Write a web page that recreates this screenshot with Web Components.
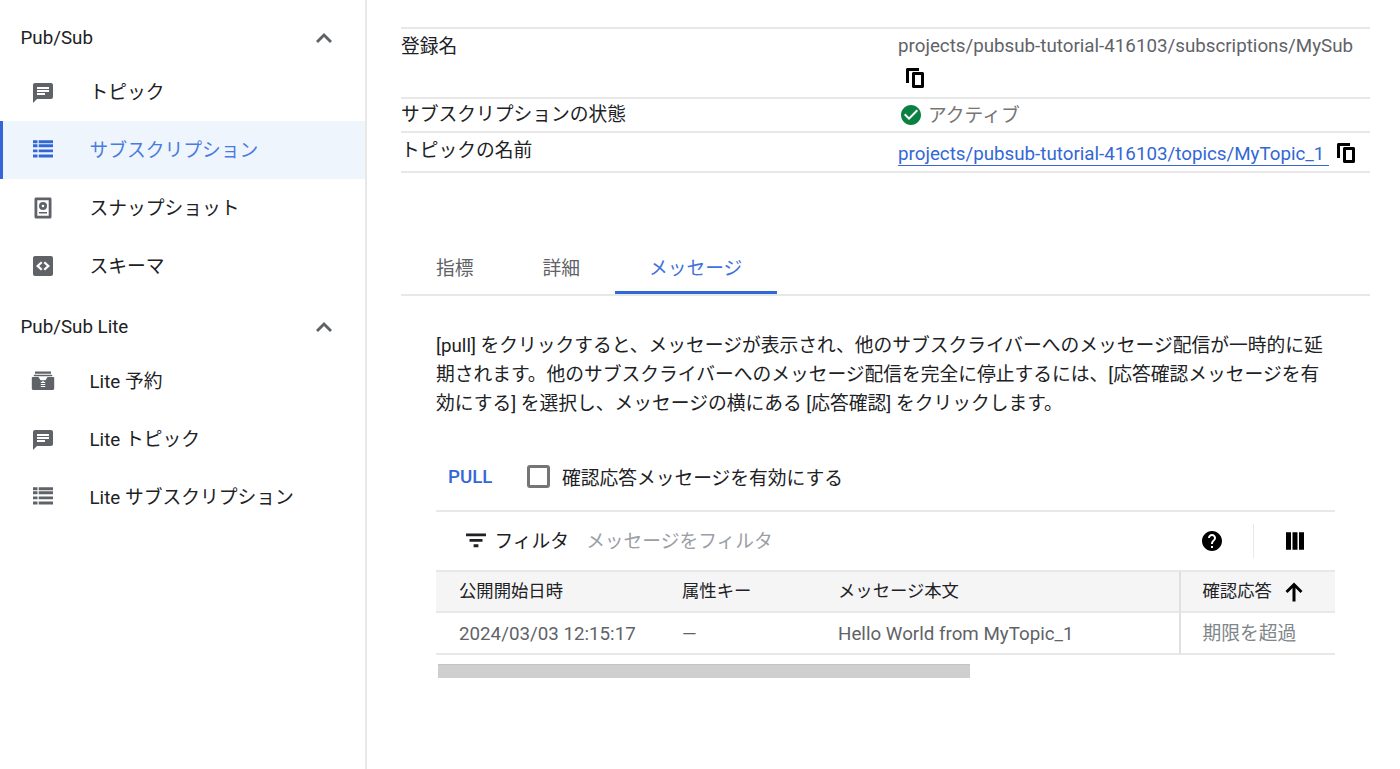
<!DOCTYPE html>
<html lang="ja">
<head>
<meta charset="utf-8">
<title>Pub/Sub</title>
<style>
  html, body { margin: 0; height: 100%; background: #fff; overflow: hidden; }
  body {
    display: flex;
    font-family: Roboto, "Noto Sans CJK JP", sans-serif;
    font-size: 18.75px;
    color: #202124;
  }
</style>
</head>
<body>
<side-nav>
  <nav-section label="Pub/Sub">
    <nav-item icon="chat">トピック</nav-item>
    <nav-item icon="list" active>サブスクリプション</nav-item>
    <nav-item icon="snapshot">スナップショット</nav-item>
    <nav-item icon="schema">スキーマ</nav-item>
  </nav-section>
  <nav-section label="Pub/Sub Lite" class="lite">
    <nav-item icon="reservation">Lite 予約</nav-item>
    <nav-item icon="chat">Lite トピック</nav-item>
    <nav-item icon="list">Lite サブスクリプション</nav-item>
  </nav-section>
</side-nav>
<sub-detail></sub-detail>

<script>
(function () {
const ICONS = {
  chat: '<path transform="translate(0 1)" d="M20 2H4c-1.1 0-1.99.9-1.99 2L2 22l4-4h14c1.1 0 2-.9 2-2V4c0-1.1-.9-2-2-2zM6 9h12v2H6V9zm8 5H6v-2h8v2zm4-6H6V6h12v2z"/>',
  list: '<path transform="translate(0 -1.200)" d="M2 7.500h4.500v2.900H2zM2 12.600h4.500v2.900H2zM2 17.700h4.500v2.900H2zM2 3.500h4.500v2.900H2zM7.700 7.500H22v2.900H7.700zM7.700 12.600H22v2.900H7.700zM7.700 17.700H22v2.900H7.700zM7.700 3.500H22v2.900H7.700z"/>',
  snapshot: '<path fill-rule="evenodd" d="M5 1.500h14c.8 0 1.500.7 1.500 1.500v18c0 .8-.7 1.500-1.500 1.500H5c-.8 0-1.500-.7-1.500-1.500V3c0-.8.7-1.500 1.500-1.500zM6.300 4.300v15.400h11.400V4.300z"/><path fill-rule="evenodd" d="M12 6a4 4 0 1 1 0 8 4 4 0 0 1 0-8zm0 2.700a1.300 1.300 0 1 0 0 2.600 1.300 1.300 0 0 0 0-2.600zM8 16h8v1.500H8z"/>',
  schema: '<path fill-rule="evenodd" d="M4 2h16c1.100 0 2 .9 2 2v16c0 1.100-.9 2-2 2H4c-1.100 0-2-.9-2-2V4c0-1.100.9-2 2-2zm6 5.500L5 12l5 4.500 1.500-1.600L8.200 12l3.300-2.900zm4 0l-1.500 1.600 3.300 2.900-3.300 2.900 1.500 1.600 5-4.500z"/>',
  reservation: '<path fill-rule="evenodd" d="M4 2.500h16v2.300H4zM2.800 5.700h18.400v1.600H2.800zM1.500 8h21c.4 0 .7.3.7.7v10.800c0 .8-.7 1.500-1.500 1.500H2.300c-.8 0-1.500-.7-1.500-1.500V8.700c0-.4.3-.7.7-.7zM7.500 8l2 3.300h5l2-3.300zM11.300 12v1H9.800v1.100h4.400V13h-1.500v-1zm-1.500 3v1h4.400v-1zm0 2v1h4.400v-1z"/>',
  copy: '<path fill-rule="evenodd" d="M4.500 2H16v3H6v12H3V3.500C3 2.700 3.700 2 4.500 2zM10.500 6h9c.8 0 1.500.7 1.500 1.500v13c0 .8-.7 1.500-1.500 1.500h-9C9.700 22 9 21.300 9 20.500v-13C9 6.700 9.700 6 10.500 6zM12 9v10h6V9z"/>',
  check: '<path d="M12 2C6.480 2 2 6.480 2 12s4.480 10 10 10 10-4.480 10-10S17.520 2 12 2zm-2 15l-5-5 1.410-1.410L10 14.170l7.590-7.590L19 8l-9 9z"/>',
  help: '<path d="M12 2C6.480 2 2 6.480 2 12s4.480 10 10 10 10-4.480 10-10S17.520 2 12 2zm1 17h-2v-2h2v2zm2.070-7.750l-.9.920C13.450 12.900 13 13.500 13 15h-2v-.5c0-1.100.45-2.100 1.170-2.830l1.240-1.260c.37-.36.59-.86.59-1.410 0-1.100-.9-2-2-2s-2 .9-2 2H8c0-2.210 1.790-4 4-4s4 1.790 4 4c0 .88-.36 1.680-.93 2.250z"/>',
  columns: '<path d="M3 3.250h5v17.500H3zM9.500 3.250h5v17.500h-5zM16 3.250h5v17.500h-5z"/>',
  arrowUp: '<path d="M12 2.500L3.500 11l2 2 5-4.900v13.400h3V8.100l5 4.900 2-2z"/>',
  filter: '<path d="M2.800 6h18.400v2.600H2.800zM6 11h12v2.600H6zM9.800 16h4.400v2.600H9.800z"/>',
  chevron: '<path d="M12 7l-8 8 2 2 6-6 6 6 2-2z"/>',
};

class MatIcon extends HTMLElement {
  connectedCallback() {
    const root = this.shadowRoot || this.attachShadow({ mode: 'open' });
    const size = this.getAttribute('size') || 24;
    root.innerHTML = `
      <style>
        :host { display: inline-flex; flex: none; width: ${size}px; height: ${size}px; color: inherit; }
        svg { width: 100%; height: 100%; fill: currentColor; display: block; }
      </style>
      <svg viewBox="0 0 24 24" aria-hidden="true">${ICONS[this.getAttribute('name')] || ''}</svg>`;
  }
}
customElements.define('mat-icon', MatIcon);

class SideNav extends HTMLElement {
  constructor() {
    super();
    this.attachShadow({ mode: 'open' }).innerHTML = `
      <style>
        :host {
          display: block;
          flex: none;
          width: 365px;
          height: 769px;
          box-sizing: content-box;
          border-right: 2px solid #e8e8e8;
          padding-top: 12px;
        }
      </style>
      <slot></slot>`;
  }
}
customElements.define('side-nav', SideNav);

class NavSection extends HTMLElement {
  constructor() {
    super();
    const label = this.getAttribute('label');
    this.attachShadow({ mode: 'open' }).innerHTML = `
      <style>
        :host { display: block; }
        :host(.lite) { margin-top: 6px; }
        .head {
          display: flex;
          align-items: center;
          justify-content: space-between;
          height: 51px;
          padding: 0 29px 0 20.5px;
          color: #202124;
        }
        mat-icon { color: #5f6368; }
      </style>
      <div class="head"><span>${label}</span><mat-icon name="chevron"></mat-icon></div>
      <slot></slot>`;
  }
}
customElements.define('nav-section', NavSection);

class NavItem extends HTMLElement {
  constructor() {
    super();
    const active = this.hasAttribute('active');
    this.attachShadow({ mode: 'open' }).innerHTML = `
      <style>
        :host { display: block; }
        .row {
          display: flex;
          align-items: center;
          height: 58px;
          gap: 34.5px;
          padding-left: 31px;
          box-sizing: border-box;
          color: #202124;
        }
        .row span { padding-bottom: 4px; }
        mat-icon { color: #5f6368; }
        .row.on {
          background: #eef5fd;
          border-left: 3px solid #3367d6;
          padding-left: 28px;
          color: #4a7be0;
        }
        .row.on mat-icon { color: #3367d6; }
      </style>
      <div class="row ${active ? 'on' : ''}">
        <mat-icon name="${this.getAttribute('icon')}"></mat-icon>
        <span><slot></slot></span>
      </div>`;
  }
}
customElements.define('nav-item', NavItem);

class DetailRow extends HTMLElement {
  constructor() {
    super();
    this.attachShadow({ mode: 'open' }).innerHTML = `
      <style>
        :host {
          display: grid;
          grid-template-columns: 497px 1fr;
          border-bottom: 2px solid #e8e8e8;
          line-height: 34px;
          color: #202124;
        }
        .label { padding-top: 1px; }
        .value { color: #5f6368; min-width: 0; }
      </style>
      <div class="label"><slot name="label"></slot></div>
      <div class="value"><slot></slot></div>`;
  }
}
customElements.define('detail-row', DetailRow);

class TabBar extends HTMLElement {
  constructor() {
    super();
    this.attachShadow({ mode: 'open' }).innerHTML = `
      <style>
        :host {
          display: flex;
          height: 55px;
          padding-left: .5px;
          border-bottom: 2px solid #e8e8e8;
          box-sizing: border-box;
          color: #5f6368;
        }
        .tab { display: flex; align-items: center; padding: 1px 34.5px 3px; height: 53px; box-sizing: border-box; }
        .tab.on { color: #3f72dc; border-bottom: 3px solid #3367d6; padding-bottom: 0; padding-right: 35px; }
      </style>
      <div class="tab">指標</div>
      <div class="tab">詳細</div>
      <div class="tab on">メッセージ</div>`;
  }
}
customElements.define('tab-bar', TabBar);

class MessageTable extends HTMLElement {
  constructor() {
    super();
    this.attachShadow({ mode: 'open' }).innerHTML = `
      <style>
        :host { display: block; width: 899px; font-size: 17.33px; color: #202124; }
        .filter {
          display: flex;
          align-items: center;
          height: 58px;
          border-top: 2px solid #e8e8e8;
          padding-left: 27px;
          font-size: 18.75px;
        }
        .filter .left { display: flex; align-items: center; padding-bottom: 3px; }
        .filter .ph { margin-left: 17px; color: #9aa0a6; }
        .filter .txt { margin-left: 5.5px; }
        .tools { margin-left: auto; display: flex; align-items: center; color: #000; }
        .sep { width: 1px; height: 34px; background: #e8e8e8; margin: 0 29.5px 0 29px; }
        .tools .cols { margin-right: 28px; }
        .grid {
          display: grid;
          grid-template-columns: 223px 156px 364px 1fr;
        }
        .cell {
          height: 42px;
          display: flex;
          align-items: center;
          padding-left: 23px;
          box-sizing: border-box;
          border-bottom: 2px solid #e8e8e8;
          white-space: nowrap;
        }
        .head { background: #f5f5f5; border-top: 2px solid #e8e8e8; height: 43px; padding-bottom: 4px; }
        .body { color: #5f6368; font-size: 18.75px; padding-top: 2px; }
        .last { border-left: 2px solid #e0e0e0; padding-left: 21.5px; }
        .head mat-icon { margin: 4px 0 0 10.5px; color: #000; }
        .body.muted { color: #80868b; padding-top: 0; padding-bottom: 4px; }
        .track { margin: 9px 0 0 2px; width: 532px; height: 14px; background: #cfcfcf; border-top: 1px solid #c4c4c4; box-sizing: border-box; }
      </style>
      <div class="filter">
        <div class="left">
          <mat-icon name="filter" size="26"></mat-icon>
          <span class="txt">フィルタ</span>
          <span class="ph">メッセージをフィルタ</span>
        </div>
        <div class="tools">
          <mat-icon name="help"></mat-icon>
          <div class="sep"></div>
          <mat-icon class="cols" name="columns"></mat-icon>
        </div>
      </div>
      <div class="grid">
        <div class="cell head">公開開始日時</div>
        <div class="cell head">属性キー</div>
        <div class="cell head">メッセージ本文</div>
        <div class="cell head last">確認応答<mat-icon name="arrowUp"></mat-icon></div>
        <div class="cell body">2024/03/03 12:15:17</div>
        <div class="cell body">—</div>
        <div class="cell body">Hello World from MyTopic_1</div>
        <div class="cell body last muted">期限を超過</div>
      </div>
      <div class="track"></div>`;
  }
}
customElements.define('message-table', MessageTable);

class SubDetail extends HTMLElement {
  constructor() {
    super();
    this.attachShadow({ mode: 'open' }).innerHTML = `
      <style>
        :host { display: block; flex: 1; min-width: 0; padding: 27px 30px 0 34px; }
        .rows { border-top: 2px solid #e8e8e8; }
        detail-row.tight { line-height: 31px; }
        .copy { display: block; margin: 0 0 4px 5px; height: 30px; color: #000; }
        .status { display: flex; align-items: center; gap: 5px; color: #757575; padding-left: 1px; height: 32px; }
        .status span { padding-top: 2px; }
        .status mat-icon { color: #0b8043; }
        .topic { display: flex; align-items: center; height: 36px; padding-top: 2px; }
        .topic a { color: #3367d6; text-decoration: none; border-bottom: 1px solid #3367d6; padding-right: 4.5px; line-height: 22px; margin-top: 2px; }
        .topic mat-icon { margin-left: 5.5px; color: #000; }
        tab-bar { margin-top: 68px; }
        .body { padding: 0 0 0 35px; }
        p { margin: 36px 0 0; width: 899px; line-height: 29px; color: #202124; }
        .actions { display: flex; align-items: center; height: 44px; margin-top: 35px; margin-bottom: 12px; }
        .pull { color: #3367d6; font-weight: 500; margin: 2px 34.5px 0 12px; }
        .box { width: 17px; height: 17px; border: 3px solid #757575; border-radius: 3px; margin-right: 12px; }
        [slot] { white-space: nowrap; }
      </style>
      <div class="rows">
        <detail-row>
          <span slot="label">登録名</span>
          <div>projects/pubsub-tutorial-416103/subscriptions/MySub</div>
          <mat-icon class="copy" name="copy"></mat-icon>
        </detail-row>
        <detail-row class="tight">
          <span slot="label">サブスクリプションの状態</span>
          <div class="status"><mat-icon name="check"></mat-icon><span>アクティブ</span></div>
        </detail-row>
        <detail-row>
          <span slot="label">トピックの名前</span>
          <div class="topic"><a>projects/pubsub-tutorial-416103/topics/MyTopic_1</a><mat-icon name="copy"></mat-icon></div>
        </detail-row>
      </div>
      <tab-bar></tab-bar>
      <div class="body">
        <p>[pull] をクリックすると、メッセージが表示され、他のサブスクライバーへのメッセージ配信が一時的に延期されます。他のサブスクライバーへのメッセージ配信を完全に停止するには、[応答確認メッセージを有効にする] を選択し、メッセージの横にある [応答確認] をクリックします。</p>
        <div class="actions">
          <span class="pull">PULL</span>
          <span class="box"></span>
          <span>確認応答メッセージを有効にする</span>
        </div>
        <message-table></message-table>
      </div>`;
  }
}
customElements.define('sub-detail', SubDetail);
})();
</script>
</body>
</html>
